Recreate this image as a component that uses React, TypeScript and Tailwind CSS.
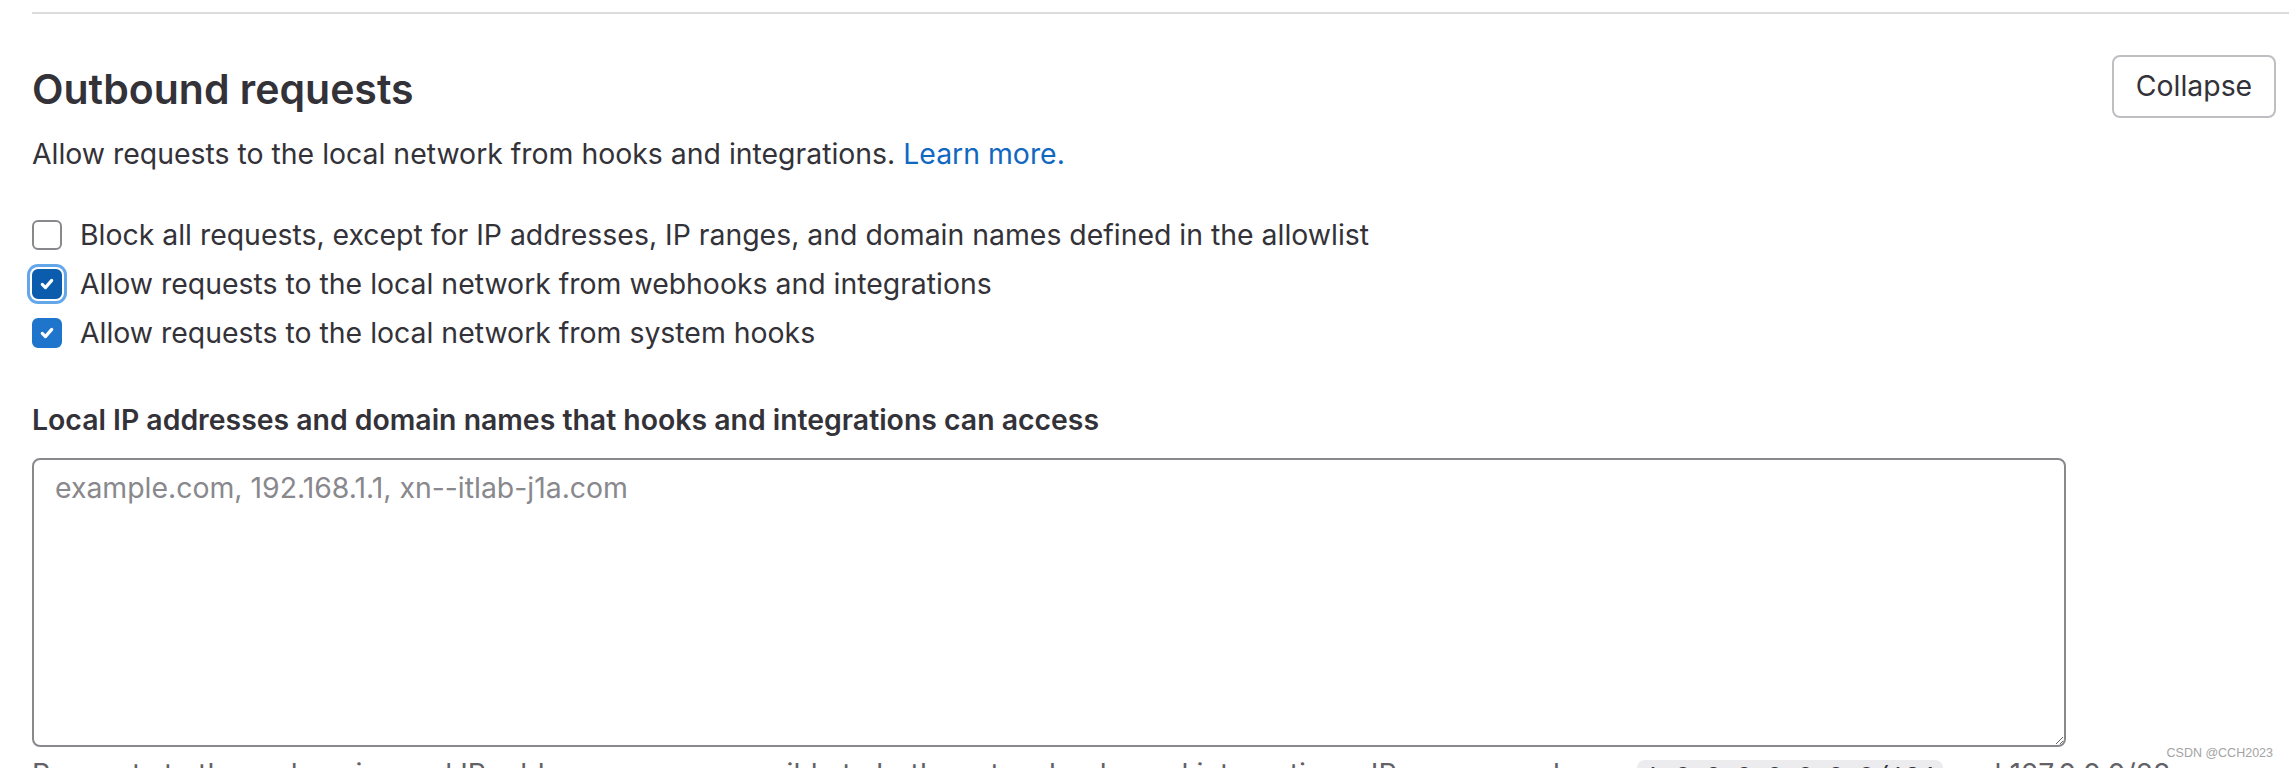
import React from "react";

function CheckIcon() {
    return (
        <svg width="18" height="18" viewBox="0 0 16 16" fill="none">
            <path d="M3.8 8.4l2.8 2.8 5.6-6.4" stroke="#fff" strokeWidth="2.8" strokeLinecap="round" strokeLinejoin="round" />
        </svg>
    );
}

type RowProps = { label: string; checked?: boolean; focused?: boolean };

function CheckRow({ label, checked, focused }: RowProps) {
    let box = "border-2 border-[#89888d] bg-white";
    if (checked) box = "bg-[#1f75cb] border-2 border-[#1f75cb]";
    if (focused) box = "bg-[#0b5cad] border-2 border-[#0b5cad] shadow-[0_0_0_2px_#ffffff,0_0_0_5px_#63a6e9]";
    return (
        <div className="flex items-center h-[49px]">
            <div className={`w-[30px] h-[30px] rounded-[6px] flex items-center justify-center shrink-0 ${box}`}>
                {checked && <CheckIcon />}
            </div>
            <span className="ml-[18px] text-[28.4px] leading-[40px] text-[#333238]">{label}</span>
        </div>
    );
}

export default function App() {
    return (
        <div className="relative w-[2289px] h-[768px] overflow-hidden bg-white font-['Inter',sans-serif] text-[#333238]">
            {/* divider */}
            <div className="ml-[32px] mt-[12px] border-t-2 border-[#dcdcde]" />

            <div className="pl-[32px] pr-[13px]">
                {/* header */}
                <div className="flex justify-between items-start mt-[41px]">
                    <div>
                        <h2 className="mt-[8px] text-[41px] leading-[52px] font-semibold text-[#333238]">Outbound requests</h2>
                        <p className="mt-[19px] text-[28.4px] leading-[40px]">
                            Allow requests to the local network from hooks and integrations.{" "}
                            <a className="text-[#1068bf]">Learn more.</a>
                        </p>
                    </div>
                    <button className="h-[63px] w-[164px] border-2 border-[#bfbfc3] rounded-[8px] bg-white text-[28.4px] text-[#333238]">
                        Collapse
                    </button>
                </div>

                {/* options */}
                <div className="mt-[36px]">
                    <CheckRow label="Block all requests, except for IP addresses, IP ranges, and domain names defined in the allowlist" />
                    <CheckRow label="Allow requests to the local network from webhooks and integrations" checked focused />
                    <CheckRow label="Allow requests to the local network from system hooks" checked />
                </div>

                {/* allowlist */}
                <label className="block mt-[43px] text-[28.4px] leading-[40px] font-semibold">
                    Local IP addresses and domain names that hooks and integrations can access
                </label>
                <textarea
                    className="block mt-[18px] w-[2034px] h-[289px] border-2 border-[#89888d] rounded-[8px] px-[21px] py-[12px] text-[28.4px] leading-[32px] placeholder:text-[#89888d] outline-none resize-y"
                    placeholder="example.com, 192.168.1.1, xn--itlab-j1a.com"
                />
                <p className="mt-[7px] text-[28.4px] leading-[40px] text-[#626168] whitespace-nowrap">
                    Requests to these domains and IP addresses are accessible to both system hooks and integrations. IP ranges such as{" "}
                    <code className="ml-[20px] bg-[#ececef] rounded-[8px] px-[8px] py-[3px] font-['Liberation_Mono',monospace] text-[25.5px] text-[#333238]">1:0:0:0:0:0:0:0/124</code>{" "}
                    and 127.0.0.0/28 are supported.
                </p>
            </div>

            {/* watermark */}
            <span className="absolute right-[16px] top-[744px] text-[12.5px] leading-[18px] text-[#a3a3a3] font-['Liberation_Sans',sans-serif]">
                CSDN @CCH2023
            </span>
        </div>
    );
}
